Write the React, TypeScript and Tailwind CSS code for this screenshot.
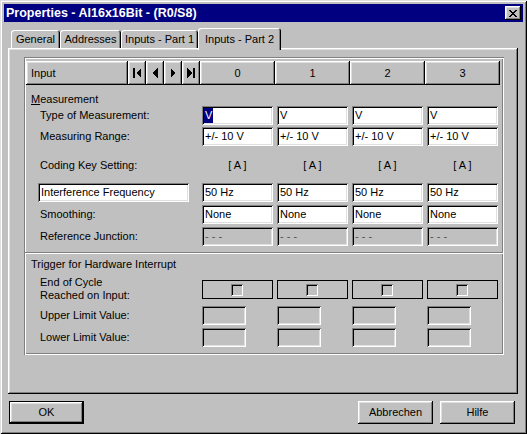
const raised =
  "shadow-[inset_-1px_-1px_#000,inset_1px_1px_#fff,inset_-2px_-2px_#808080,inset_2px_2px_#dfdfdf]";
const sunken =
  "shadow-[inset_1px_1px_#808080,inset_-1px_-1px_#fff,inset_2px_2px_#000,inset_-2px_-2px_#dfdfdf]";

const cols = [0, 1, 2, 3];

function CloseGlyph() {
  return (
    <svg width="8" height="7" viewBox="0 0 8 7" shapeRendering="crispEdges">
      <path
        d="M0 0h2v1H0zM6 0h2v1H6zM1 1h2v1H1zM5 1h2v1H5zM2 2h4v1H2zM3 3h2v1H3zM2 4h4v1H2zM1 5h2v1H1zM5 5h2v1H5zM0 6h2v1H0zM6 6h2v1H6z"
        fill="#000"
      />
    </svg>
  );
}

function NavGlyph({ kind }: { kind: "first" | "prev" | "next" | "last" }) {
  return (
    <svg width="10" height="10" viewBox="0 0 10 10" shapeRendering="crispEdges">
      {kind === "first" && (
        <>
          <rect x="1" y="0" width="2" height="10" fill="#000" />
          <polygon points="9,0 4,5 9,10" fill="#000" />
        </>
      )}
      {kind === "prev" && <polygon points="7.5,0 2.5,5 7.5,10" fill="#000" />}
      {kind === "next" && <polygon points="2.5,0 7.5,5 2.5,10" fill="#000" />}
      {kind === "last" && (
        <>
          <polygon points="1,0 6,5 1,10" fill="#000" />
          <rect x="7" y="0" width="2" height="10" fill="#000" />
        </>
      )}
    </svg>
  );
}

function Field({ children, disabled }: { children: React.ReactNode; disabled?: boolean }) {
  return (
    <div
      className={`w-[71px] h-[19px] flex items-center pl-[3px] whitespace-nowrap ${sunken} ${
        disabled ? "bg-[#c0c0c0] text-[#505050]" : "bg-white"
      }`}
    >
      {children}
    </div>
  );
}

function Row({
  label,
  children,
  className = "",
}: {
  label: React.ReactNode;
  children: React.ReactNode;
  className?: string;
}) {
  return (
    <div className={`flex pl-[2px] ${className}`}>
      <div className="w-[176px] shrink-0">{label}</div>
      {children}
    </div>
  );
}

function Label({ text }: { text: string }) {
  return <div className="h-[19px] pl-[14px] flex items-center whitespace-nowrap">{text}</div>;
}

export default function App() {
  return (
    <div className="w-[527px] h-[434px] overflow-hidden bg-[#c0c0c0] pt-[4px] font-['Liberation_Sans',Arial,sans-serif] text-[11px] text-black shadow-[inset_1px_1px_#dfdfdf,inset_-1px_-1px_#000,inset_2px_2px_#fff,inset_-2px_-2px_#808080]">
      {/* title bar */}
      <div className="mx-[4px] h-[18px] bg-[#000080] flex items-center justify-between pl-[2px] pr-[2px]">
        <span className="text-white font-bold text-[12.5px] leading-none">
          Properties - AI16x16Bit - (R0/S8)
        </span>
        <div className={`w-[16px] h-[14px] bg-[#c0c0c0] flex items-center justify-center ${raised}`}>
          <CloseGlyph />
        </div>
      </div>

      {/* tabs */}
      <div className="mt-[6px] ml-[11px] h-[20px] flex items-end">
        {[
          ["General", "w-[49px]"],
          ["Addresses", "w-[61px]"],
          ["Inputs - Part 1", "w-[77px]"],
        ].map(([t, w]) => (
          <div
            key={t}
            className={`${w} h-[18px] pt-[2px] leading-[14px] text-center rounded-t-[3px] shadow-[inset_1px_1px_#fff,inset_-1px_0_#000,inset_-2px_0_#808080]`}
          >
            {t}
          </div>
        ))}
        <div className="relative z-10 w-[83px] h-[22px] -mb-[2px] pt-[4px] leading-[14px] text-center bg-[#c0c0c0] rounded-t-[3px] shadow-[inset_1px_1px_#fff,inset_-1px_0_#000,inset_-2px_0_#808080]">
          Inputs - Part 2
        </div>
      </div>

      {/* panel */}
      <div className={`ml-[8px] w-[510px] h-[346px] pt-[9px] pl-[16px] ${raised}`}>
        <div className="w-[480px] h-[298px] pt-[4px] shadow-[inset_1px_1px_#808080,inset_-1px_-1px_#fff,inset_2px_2px_#fff,inset_-2px_-2px_#808080]">
          {/* header */}
          <div className="ml-[2px] flex h-[24px]">
            <div className={`w-[102px] pl-[5px] flex items-center ${raised}`}>Input</div>
            {(["first", "prev", "next", "last"] as const).map((k) => (
              <div key={k} className={`w-[18px] flex items-center justify-center ${raised}`}>
                <NavGlyph kind={k} />
              </div>
            ))}
            {cols.map((c) => (
              <div key={c} className={`w-[75px] flex items-center justify-center ${raised}`}>
                {c}
              </div>
            ))}
          </div>

          <div className="mt-[7px] h-[14px] leading-[14px] pl-[7px]">
            <span className="underline">M</span>easurement
          </div>

          <Row label={<Label text="Type of Measurement:" />}>
            {cols.map((c) => (
              <div key={c} className="w-[75px]">
                <Field>
                  {c === 0 ? (
                    <span className="-ml-[1px] px-[1px] h-[15px] leading-[15px] bg-[#000080] text-white">V</span>
                  ) : (
                    "V"
                  )}
                </Field>
              </div>
            ))}
          </Row>

          <Row className="mt-[2px]" label={<Label text="Measuring Range:" />}>
            {cols.map((c) => (
              <div key={c} className="w-[75px]">
                <Field>+/- 10 V</Field>
              </div>
            ))}
          </Row>

          <Row
            className="mt-[12px]"
            label={<div className="h-[14px] leading-[14px] pl-[14px]">Coding Key Setting:</div>}
          >
            {cols.map((c) => (
              <div key={c} className="w-[71px] mr-[4px] h-[14px] leading-[14px] text-center whitespace-pre">
                [ A ]
              </div>
            ))}
          </Row>

          <Row
            className="mt-[11px]"
            label={
              <div className={`ml-[12px] w-[151px] h-[19px] bg-white flex items-center pl-[3px] ${sunken}`}>
                Interference Frequency
              </div>
            }
          >
            {cols.map((c) => (
              <div key={c} className="w-[75px]">
                <Field>50 Hz</Field>
              </div>
            ))}
          </Row>

          <Row className="mt-[3px]" label={<Label text="Smoothing:" />}>
            {cols.map((c) => (
              <div key={c} className="w-[75px]">
                <Field>None</Field>
              </div>
            ))}
          </Row>

          <Row className="mt-[3px]" label={<Label text="Reference Junction:" />}>
            {cols.map((c) => (
              <div key={c} className="w-[75px]">
                <Field disabled>- - -</Field>
              </div>
            ))}
          </Row>

          <div className="mt-[6px] ml-[1px] mr-[1px] border-t border-t-[#808080] border-b border-b-white" />

          <div className="mt-[3px] h-[14px] leading-[14px] pl-[7px]">Trigger for Hardware Interrupt</div>

          <Row
            className="mt-[4px]"
            label={
              <div className="pl-[14px] pt-[1px] leading-[13px]">
                End of Cycle
                <br />
                Reached on Input:
              </div>
            }
          >
            {cols.map((c) => (
              <div key={c} className="w-[75px] pt-[5px]">
                <div className="w-[71px] h-[19px] border border-black flex items-center justify-center">
                  <div className="w-[12px] h-[12px] -ml-[2px] shadow-[inset_1px_1px_#808080,inset_-1px_-1px_#fff,inset_2px_2px_#000]" />
                </div>
              </div>
            ))}
          </Row>

          <Row className="mt-[4px]" label={<Label text="Upper Limit Value:" />}>
            {cols.map((c) => (
              <div key={c} className="w-[75px]">
                <div className={`w-[44px] h-[19px] ${sunken}`} />
              </div>
            ))}
          </Row>

          <Row className="mt-[3px]" label={<Label text="Lower Limit Value:" />}>
            {cols.map((c) => (
              <div key={c} className="w-[75px]">
                <div className={`w-[44px] h-[19px] ${sunken}`} />
              </div>
            ))}
          </Row>
        </div>
      </div>

      {/* buttons */}
      <div className="mt-[7px] flex pl-[9px] pr-[12px]">
        <div className={`w-[75px] h-[23px] border border-black flex items-center justify-center ${raised}`}>
          OK
        </div>
        <div className={`ml-auto w-[75px] h-[23px] flex items-center justify-center ${raised}`}>
          Abbrechen
        </div>
        <div className={`ml-[7px] w-[75px] h-[23px] flex items-center justify-center ${raised}`}>
          Hilfe
        </div>
      </div>
    </div>
  );
}
